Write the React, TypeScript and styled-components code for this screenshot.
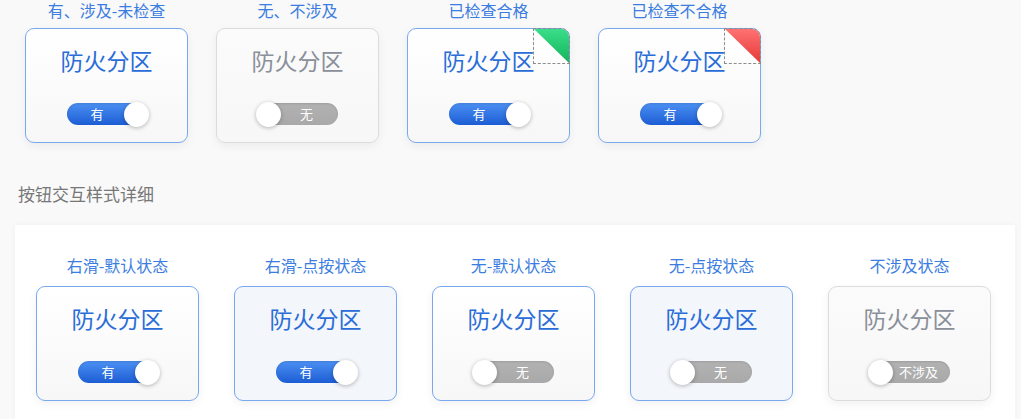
import styled, { createGlobalStyle, css } from "styled-components";

type Variant = "active" | "pressed" | "disabled";
type Flag = "pass" | "fail";

const GlobalStyle = createGlobalStyle`
	html, body {
		margin: 0;
		background: #f9f9f9;
		font-family: "Noto Sans CJK SC", "Noto Sans", sans-serif;
		overflow: hidden;
	}
`;

const topItems: { caption: string; variant: Variant; on: boolean; text: string; flag?: Flag }[] = [
	{ caption: "有、涉及-未检查", variant: "active", on: true, text: "有" },
	{ caption: "无、不涉及", variant: "disabled", on: false, text: "无" },
	{ caption: "已检查合格", variant: "active", on: true, text: "有", flag: "pass" },
	{ caption: "已检查不合格", variant: "active", on: true, text: "有", flag: "fail" },
];

const detailItems: { caption: string; variant: Variant; on: boolean; text: string }[] = [
	{ caption: "右滑-默认状态", variant: "active", on: true, text: "有" },
	{ caption: "右滑-点按状态", variant: "pressed", on: true, text: "有" },
	{ caption: "无-默认状态", variant: "active", on: false, text: "无" },
	{ caption: "无-点按状态", variant: "pressed", on: false, text: "无" },
	{ caption: "不涉及状态", variant: "disabled", on: false, text: "不涉及" },
];

function ZoneCard({
	variant,
	on,
	text,
	flag,
}: {
	variant: Variant;
	on: boolean;
	text: string;
	flag?: Flag;
}) {
	return (
		<Card $variant={variant}>
			<CardTitle $muted={variant === "disabled"}>防火分区</CardTitle>
			<Switch $on={on}>
				<SwitchText $on={on}>{text}</SwitchText>
				<Knob $on={on} />
			</Switch>
			{flag && (
				<CornerFlag>
					<FlagFill $flag={flag} />
				</CornerFlag>
			)}
		</Card>
	);
}

export default function App() {
	return (
		<>
			<GlobalStyle />
			<Page>
				<TopRow>
					{topItems.map((item) => (
						<Column key={item.caption}>
							<Caption $gap={7}>{item.caption}</Caption>
							<ZoneCard variant={item.variant} on={item.on} text={item.text} flag={item.flag} />
						</Column>
					))}
				</TopRow>

				<SectionTitle>按钮交互样式详细</SectionTitle>

				<Panel>
					<PanelRow>
						{detailItems.map((item) => (
							<Column key={item.caption}>
								<Caption $gap={10}>{item.caption}</Caption>
								<ZoneCard variant={item.variant} on={item.on} text={item.text} />
							</Column>
						))}
					</PanelRow>
				</Panel>
			</Page>
		</>
	);
}

const Page = styled.main`
	display: flex;
	flex-direction: column;
	height: 419px;
`;

const TopRow = styled.section`
	display: flex;
	gap: 28px;
	padding-left: 25px;
`;

const Column = styled.div`
	display: flex;
	flex-direction: column;
	align-items: center;
	width: 163px;
`;

const Caption = styled.div<{ $gap: number }>`
	font-size: 16px;
	line-height: 21px;
	color: #3b7de0;
	white-space: nowrap;
	margin-bottom: ${(p) => p.$gap}px;
`;

const cardLooks = {
	active: css`
		border-color: #78a9ef;
		background: linear-gradient(#ffffff, #f7f7f8);
	`,
	pressed: css`
		border-color: #78a9ef;
		background: #f3f6fb;
	`,
	disabled: css`
		border-color: #dcdcdc;
		background: linear-gradient(#fbfbfb, #f7f7f7);
	`,
};

const Card = styled.div<{ $variant: Variant }>`
	position: relative;
	box-sizing: border-box;
	width: 163px;
	height: 115px;
	border: 1px solid;
	border-radius: 9px;
	box-shadow: 0 3px 10px rgba(0, 0, 0, 0.06);
	display: flex;
	flex-direction: column;
	align-items: center;
	${(p) => cardLooks[p.$variant]}
`;

const CardTitle = styled.div<{ $muted: boolean }>`
	margin-top: 16px;
	font-size: 23px;
	line-height: 30px;
	color: ${(p) => (p.$muted ? "#8a9099" : "#2a6dd8")};
`;

const Switch = styled.div<{ $on: boolean }>`
	margin-top: 28px;
	width: 80px;
	height: 22px;
	border-radius: 11px;
	display: flex;
	flex-direction: ${(p) => (p.$on ? "row" : "row-reverse")};
	align-items: center;
	background: ${(p) =>
		p.$on ? "linear-gradient(#4c90f3, #1c5dd4)" : "linear-gradient(#b2b2b2, #a9a9a9)"};
	box-shadow: inset 0 1px 2px rgba(0, 0, 0, 0.12);
`;

const SwitchText = styled.span<{ $on: boolean }>`
	flex: 1;
	text-align: center;
	font-size: 13px;
	line-height: 22px;
	color: #fff;
	white-space: nowrap;
	padding: ${(p) => (p.$on ? "0 0 0 4px" : "0 5px 0 0")};
`;

const Knob = styled.span<{ $on: boolean }>`
	flex-shrink: 0;
	width: 25px;
	height: 25px;
	border-radius: 50%;
	background: #fff;
	box-shadow: 0 1px 4px rgba(0, 0, 0, 0.28);
	margin: ${(p) => (p.$on ? "0 -2px 0 0" : "0 0 0 -2px")};
`;

const flagColours = {
	pass: ["#3ade8a", "#12b459"],
	fail: ["#ff7272", "#e53838"],
};

const CornerFlag = styled.span`
	position: absolute;
	top: -1px;
	right: -1px;
	width: 37px;
	height: 36px;
	box-sizing: border-box;
	border: 1px dashed #8c8c8c;
	border-top-right-radius: 9px;
	overflow: hidden;
`;

const FlagFill = styled.span<{ $flag: Flag }>`
	display: block;
	width: 100%;
	height: 100%;
	clip-path: polygon(0 0, 100% 0, 100% 100%);
	background: ${(p) => `linear-gradient(${flagColours[p.$flag][0]}, ${flagColours[p.$flag][1]})`};
`;

const SectionTitle = styled.h2`
	margin: 39px 0 0 18px;
	font-size: 17px;
	font-weight: normal;
	line-height: 24px;
	color: #777;
`;

const Panel = styled.section`
	margin: 19px 0 0 15px;
	width: 1000px;
	flex: 1;
	box-sizing: border-box;
	padding: 30px 0 0 21px;
	background: #fff;
	box-shadow: 0 0 6px rgba(0, 0, 0, 0.04);
`;

const PanelRow = styled.div`
	display: flex;
	gap: 35px;
`;
